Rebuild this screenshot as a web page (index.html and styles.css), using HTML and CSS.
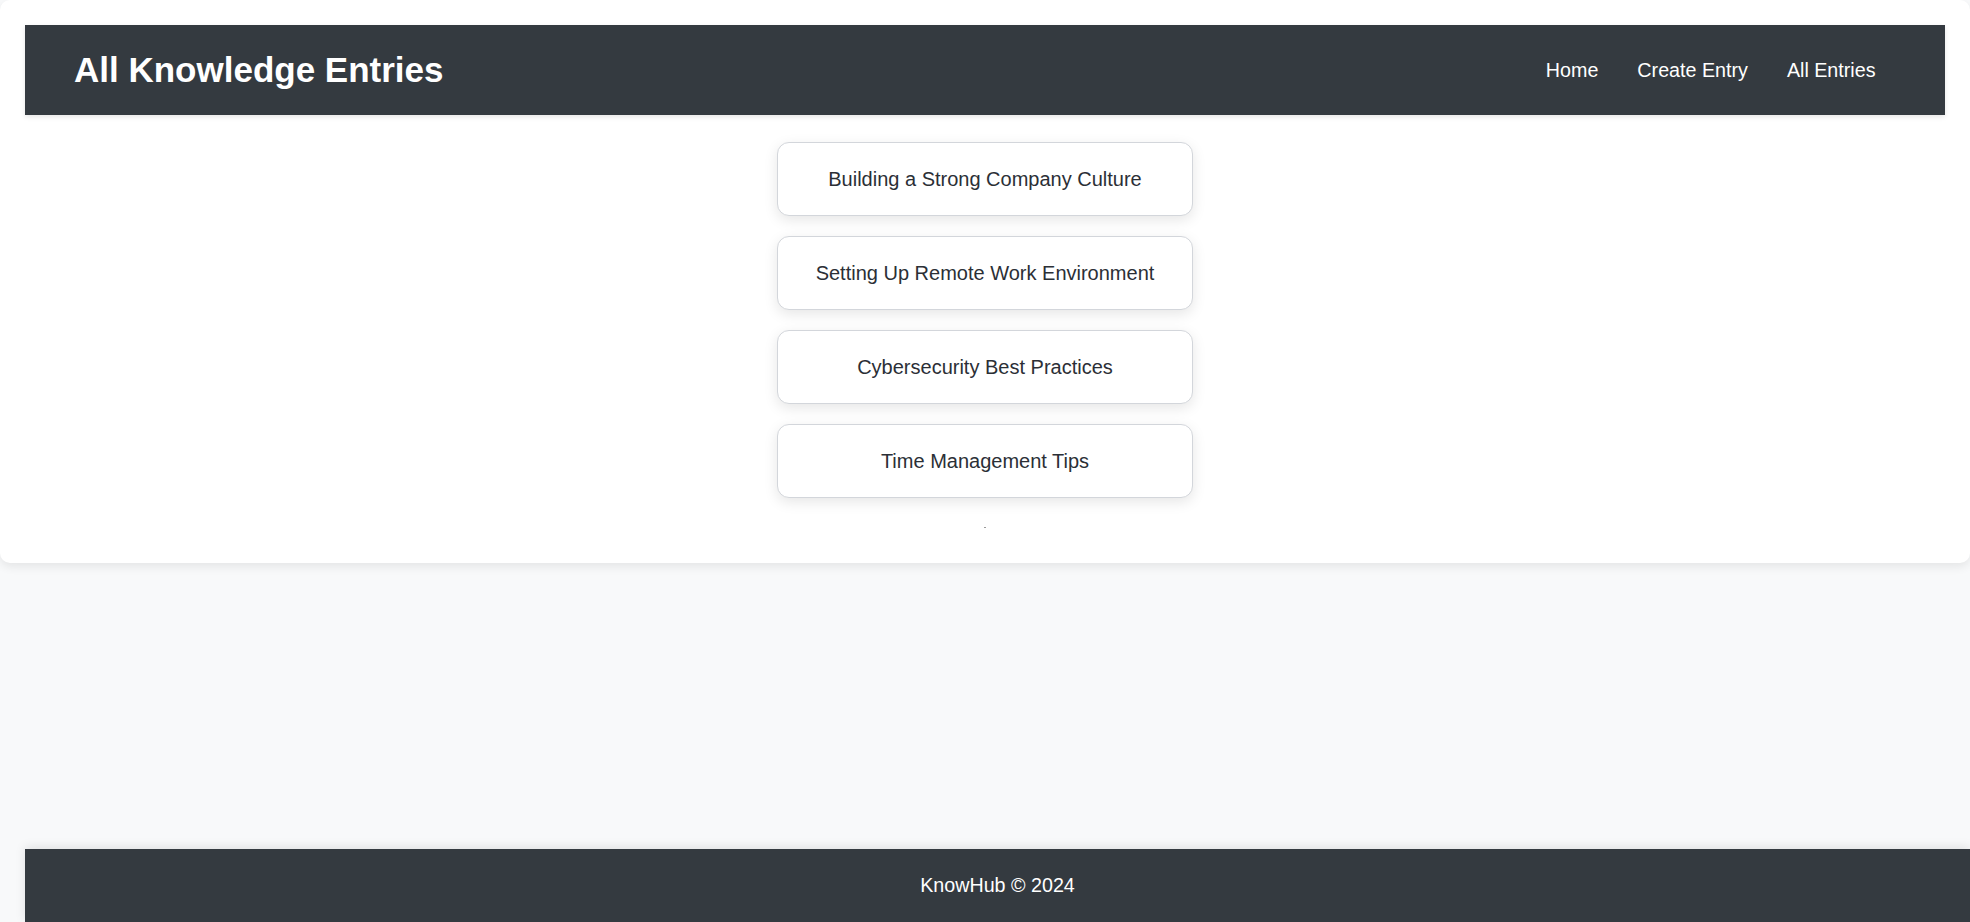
FILE: index.html
```html
<!DOCTYPE html>
<html lang="en">
<head>
<meta charset="utf-8">
<title>All Knowledge Entries</title>
<link rel="stylesheet" href="styles.css">
</head>
<body>
<div class="container">
  <header class="site-header">
    <h1 class="title">All Knowledge Entries</h1>
    <nav class="nav">
      <a href="#" class="nav-link">Home</a>
      <a href="#" class="nav-link">Create Entry</a>
      <a href="#" class="nav-link">All Entries</a>
    </nav>
  </header>
  <ul class="entry-list">
    <li class="entry-card">Building a Strong Company Culture</li>
    <li class="entry-card">Setting Up Remote Work Environment</li>
    <li class="entry-card">Cybersecurity Best Practices</li>
    <li class="entry-card">Time Management Tips</li>
  </ul>
  <div class="dot"></div>
</div>
<footer class="site-footer">KnowHub © 2024</footer>
</body>
</html>
```
FILE: styles.css
```css
html, body {
  margin: 0;
  padding: 0;
}
body {
  background: #f8f9fa;
  font-family: "Liberation Sans", Arial, sans-serif;
  min-height: 100vh;
  display: flex;
  flex-direction: column;
}
.container {
  background: #ffffff;
  border-radius: 10px;
  box-shadow: 0 4px 10px rgba(0, 0, 0, 0.08);
  padding: 25px 25px 35px 25px;
  display: flex;
  flex-direction: column;
  align-items: center;
}
.site-header {
  align-self: stretch;
  height: 90px;
  background: #343a40;
  color: #ffffff;
  display: flex;
  align-items: center;
  justify-content: space-between;
  padding: 0 50px 0 49px;
  box-shadow: 0 2px 5px rgba(0, 0, 0, 0.1);
  margin-bottom: 27px;
}
.title {
  margin: 0;
  font-size: 35px;
  font-weight: bold;
  line-height: 40px;
}
.nav {
  display: flex;
}
.nav-link {
  color: #ffffff;
  text-decoration: none;
  font-size: 19.7px;
  padding: 0 19.5px;
}
.entry-list {
  list-style: none;
  margin: 0;
  padding: 0;
  display: flex;
  flex-direction: column;
  gap: 20px;
}
.entry-card {
  box-sizing: border-box;
  width: 416px;
  padding: 25px 10px;
  line-height: 22px;
  font-size: 20px;
  text-align: center;
  color: #2b2f36;
  background: #ffffff;
  border: 1px solid #d3d6db;
  border-radius: 12px;
  box-shadow: 0 4px 14px rgba(0, 0, 0, 0.1);
}
.dot {
  width: 2px;
  height: 1px;
  background: #9a9a9a;
  margin-top: 29px;
}
.site-footer {
  margin-top: auto;
  margin-left: 25px;
  height: 73px;
  background: #343a40;
  color: #ffffff;
  font-size: 19.7px;
  display: flex;
  align-items: center;
  justify-content: center;
  box-shadow: 0 -2px 10px rgba(0, 0, 0, 0.1);
}
```
